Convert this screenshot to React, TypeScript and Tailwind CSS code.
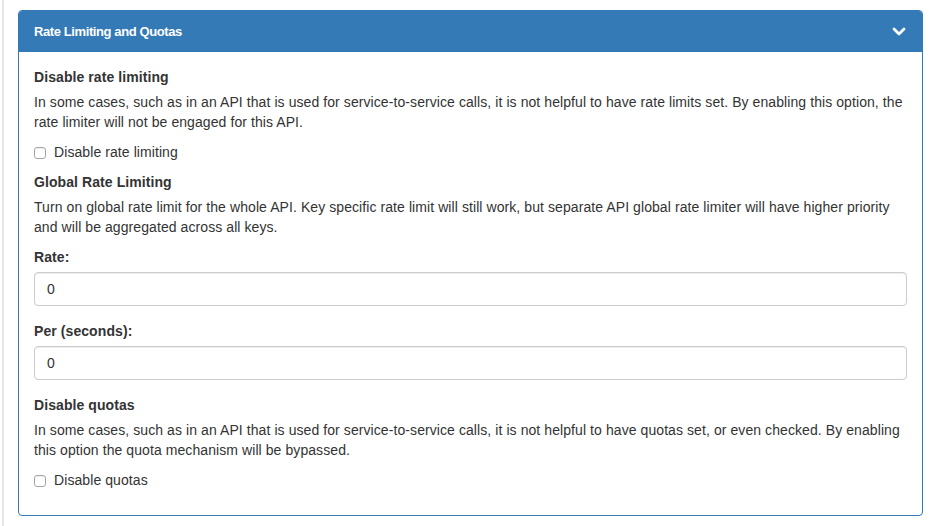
import React from "react";

function Checkbox({ label }: { label: string }) {
  return (
    <label className="flex items-center h-[20px] mt-[10px] mb-[10px]">
      <span className="w-[12px] h-[12px] border border-[#a6a6a6] rounded-[3px] bg-white shadow-[inset_0_1px_1px_rgba(0,0,0,0.08)] ml-0 mr-[8px] mt-[1px]" />
      <span className="font-normal">{label}</span>
    </label>
  );
}

function Input({ value }: { value: string }) {
  return (
    <div className="h-[34px] border border-[#cccccc] rounded-[4px] px-[12px] flex items-center shadow-[inset_0_1px_1px_rgba(0,0,0,0.075)] bg-white">
      {value}
    </div>
  );
}

export default function App() {
  return (
    <div className="min-h-[526px] bg-white font-['Liberation_Sans',Arial,sans-serif] text-[14px] leading-[20px] text-[#333333] pl-[2px]">
      <div className="min-h-[526px] border-l-2 border-[#e6e6e6] pl-[14px] pt-[10px] pr-[18px]">
        <div className="border border-[#337ab7] rounded-[4px] overflow-hidden">
          <div className="bg-[#337ab7] h-[41px] px-[15px] flex items-center justify-between text-white">
            <span className="text-[13px] font-bold tracking-[-0.4px]">Rate Limiting and Quotas</span>
            <svg width="14" height="9" viewBox="0 0 14 9" className="mr-[1px]">
              <polyline points="2,2 7,7 12,2" fill="none" stroke="#ffffff" strokeWidth="2.8" strokeLinecap="round" strokeLinejoin="round" />
            </svg>
          </div>
          <div className="px-[15px] pt-[15px] pb-[15px] tracking-[0.08px]">
            <div className="font-bold mb-[5px]">Disable rate limiting</div>
            <p>
              In some cases, such as in an API that is used for service-to-service calls, it is not helpful to have rate limits set. By enabling this option, the rate limiter will not be engaged for this API.
            </p>
            <Checkbox label="Disable rate limiting" />
            <div className="font-bold mb-[5px]">Global Rate Limiting</div>
            <p className="mb-[10px]">
              Turn on global rate limit for the whole API. Key specific rate limit will still work, but separate API global rate limiter will have higher priority and will be aggregated across all keys.
            </p>
            <div className="font-bold mb-[5px]">Rate:</div>
            <Input value="0" />
            <div className="font-bold mb-[5px] mt-[15px]">Per (seconds):</div>
            <Input value="0" />
            <div className="font-bold mb-[5px] mt-[15px]">Disable quotas</div>
            <p>
              In some cases, such as in an API that is used for service-to-service calls, it is not helpful to have quotas set, or even checked. By enabling this option the quota mechanism will be bypassed.
            </p>
            <Checkbox label="Disable quotas" />
          </div>
        </div>
      </div>
    </div>
  );
}
